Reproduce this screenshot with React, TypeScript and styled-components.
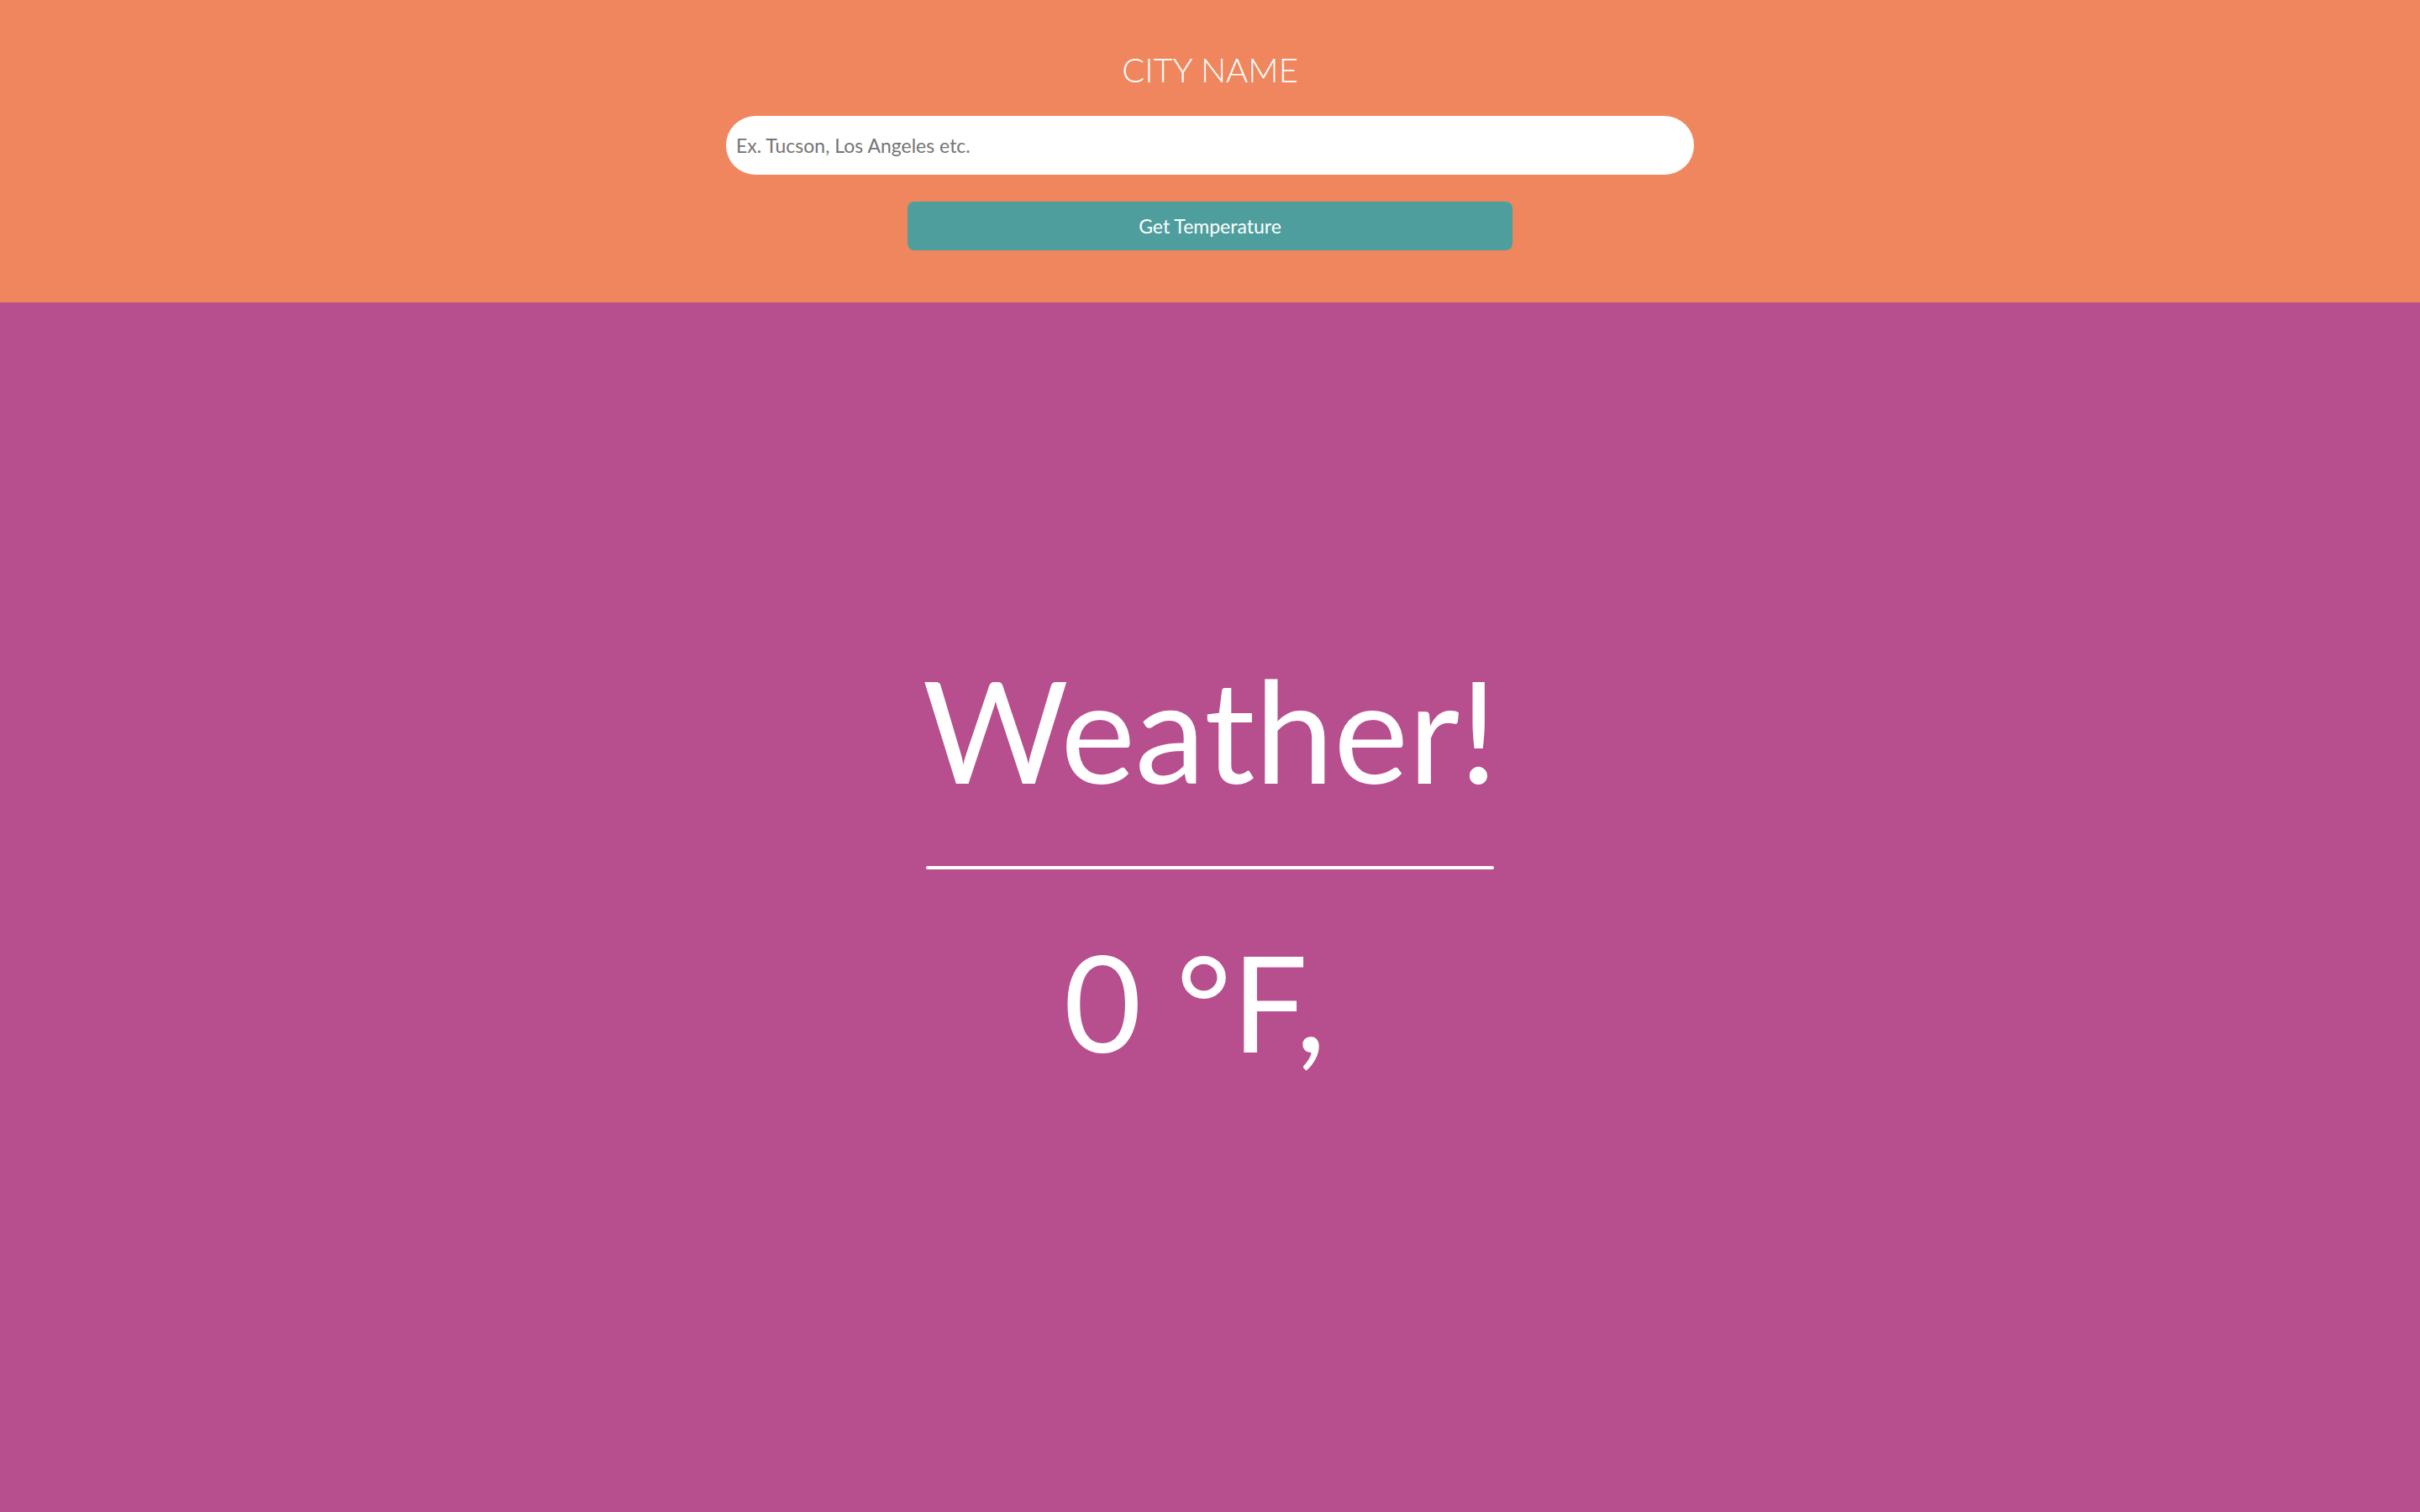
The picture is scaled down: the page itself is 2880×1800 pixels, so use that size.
import styled, { createGlobalStyle } from 'styled-components'

const GlobalStyle = createGlobalStyle`
  html, body {
    margin: 0;
    padding: 0;
    background: #b74e8d;
  }
  * {
    box-sizing: border-box;
  }
`

const Page = styled.div({
  width: '100%',
  height: '1800px',
  display: 'flex',
  flexDirection: 'column',
  fontFamily: 'Lato, "Open Sans", sans-serif',
  color: '#ffffff'
})

const SearchBar = styled.header({
  height: '360px',
  backgroundColor: '#f0865d',
  display: 'flex',
  flexDirection: 'column',
  alignItems: 'center',
  paddingTop: '63px'
})

const CityLabel = styled.label({
  fontSize: '40px',
  lineHeight: '40px',
  fontWeight: 300,
  textTransform: 'uppercase'
})

const CityInput = styled.input({
  marginTop: '35px',
  width: '1152px',
  height: '70px',
  border: 'none',
  outline: 'none',
  borderRadius: '35px',
  padding: '0 12px',
  fontFamily: 'inherit',
  fontSize: '23px',
  color: '#333',
  backgroundColor: '#fff',
  '::placeholder': { color: '#757575' }
})

const SubmitButton = styled.button({
  marginTop: '32px',
  width: '720px',
  height: '58px',
  border: 'none',
  borderRadius: '8px',
  backgroundColor: '#4f9e9e',
  color: '#fff',
  fontFamily: 'inherit',
  fontSize: '23px',
  cursor: 'pointer'
})

const Display = styled.main({
  flex: 1,
  display: 'flex',
  flexDirection: 'column',
  alignItems: 'center',
  justifyContent: 'center',
  paddingBottom: '105px'
})

const Title = styled.h1({
  margin: 0,
  fontSize: '168px',
  lineHeight: '168px',
  fontWeight: 400
})

const Divider = styled.div({
  marginTop: '79px',
  width: '676px',
  height: '4px',
  borderRadius: '2px',
  backgroundColor: '#fff'
})

const Temperature = styled.h2({
  margin: '76px 0 0',
  fontSize: '160px',
  lineHeight: '160px',
  fontWeight: 400,
  paddingRight: '36px'
})

export default function App() {
  const temp = 0
  const city = ''
  return (
    <Page>
      <GlobalStyle />
      <SearchBar>
        <CityLabel htmlFor="city">City Name</CityLabel>
        <CityInput id="city" type="text" placeholder="Ex. Tucson, Los Angeles etc." />
        <SubmitButton>Get Temperature</SubmitButton>
      </SearchBar>
      <Display>
        <Title>Weather!</Title>
        <Divider />
        <Temperature>{temp} °F, {city}</Temperature>
      </Display>
    </Page>
  )
}
